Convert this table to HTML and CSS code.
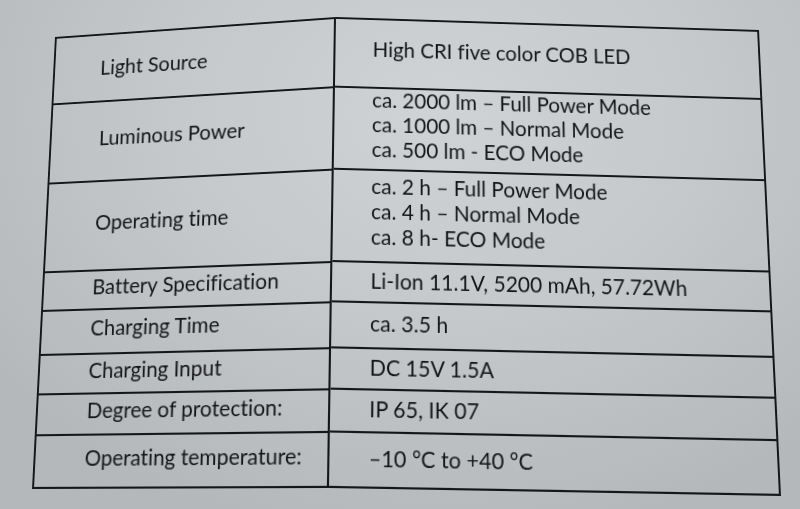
FILE: index.html
```html
<!DOCTYPE html>
<html lang="en">
<head>
<meta charset="utf-8">
<title>Technical specifications</title>
<link rel="stylesheet" href="styles.css">
</head>
<body>
<main class="sheet">
  <section class="spec">
    <div class="col col-label">
      <div class="cell cell-first">Light Source</div>
      <div class="cell">Luminous Power</div>
      <div class="cell">Operating time</div>
      <div class="cell">Battery Specification</div>
      <div class="cell">Charging Time</div>
      <div class="cell">Charging Input</div>
      <div class="cell">Degree of protection:</div>
      <div class="cell">Operating temperature:</div>
    </div>
    <div class="col col-value">
      <div class="cell cell-raised">High CRI five color COB LED</div>
      <div class="cell cell-raised">ca. 2000 lm – Full Power Mode<br>ca. 1000 lm – Normal Mode<br>ca. 500 lm - ECO Mode</div>
      <div class="cell cell-raised">ca. 2 h – Full Power Mode<br>ca. 4 h – Normal Mode<br>ca. 8 h- ECO Mode</div>
      <div class="cell">Li-Ion 11.1V, 5200 mAh, 57.72Wh</div>
      <div class="cell">ca. 3.5 h</div>
      <div class="cell">DC 15V 1.5A</div>
      <div class="cell">IP 65, IK 07</div>
      <div class="cell">–10 °C to +40 °C</div>
    </div>
  </section>
</main>
</body>
</html>
```
FILE: styles.css
```css
html, body {
  margin: 0;
  padding: 0;
}

body {
  width: 800px;
  height: 509px;
  overflow: hidden;
  background: radial-gradient(ellipse 70% 85% at 55% 22%, #d0d3d6 0%, #c5c8cb 50%, #b5b8bb 100%);
  font-family: Lato, "Noto Sans", sans-serif;
  font-variant-ligatures: none;
  color: #141517;
}

.spec {
  display: flex;
  align-items: flex-start;
}

.col {
  box-sizing: border-box;
  height: 460px;
  display: grid;
  grid-template-rows: 71px 83px 91px 39px 44px 39px 40px 49px;
  border: 2px solid #151618;
  transform-origin: 0 0;
  font-size: 20.5px;
  line-height: 25px;
}

/* perspective of the photographed sheet: each column mapped onto its quadrilateral */
.col-label {
  width: 290px;
  transform: matrix3d(0.922093, -0.071338, 0, -0.00013950,
                      -0.053813, 0.924326, 0, -0.00011919,
                      0, 0, 1, 0,
                      55, 37, 0, 1);
}

.col-value {
  width: 440px;
  border-left: 0;
  font-size: 21px;
  transform: matrix3d(0.973985, 0.030352, 0, 0.000026911,
                      -0.020705, 0.955237, 0, -0.00014073,
                      0, 0, 1, 0,
                      46, 17, 0, 1);
}

.cell {
  display: flex;
  align-items: center;
  border-bottom: 2px solid #151618;
}

.cell:last-child {
  border-bottom: 0;
}

.col-label .cell {
  padding: 0 0 7px 50px;
}

.col-label .cell-first {
  padding: 0 0 0 48px;
}

.col-value .cell {
  padding: 0 0 5px 38px;
}

/* the sheet bows upward in the middle of the upper rows */
.col-value .cell-raised {
  padding-bottom: 11px;
}
```
